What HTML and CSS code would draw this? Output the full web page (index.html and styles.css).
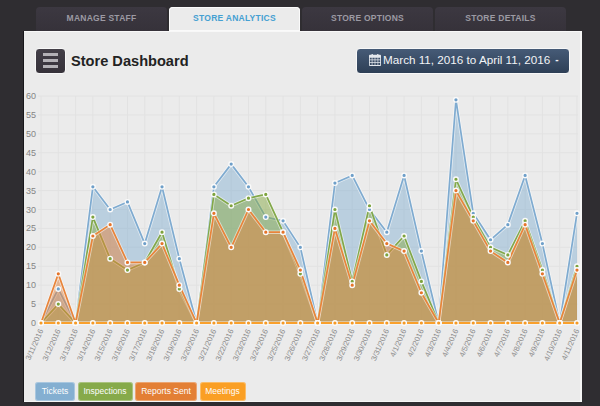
FILE: index.html
```html
<!DOCTYPE html>
<html lang="en">
<head>
<meta charset="utf-8">
<title>Store Dashboard</title>
<link rel="stylesheet" href="styles.css">
</head>
<body>
<nav class="tabs">
  <a class="tab">MANAGE STAFF</a>
  <a class="tab tab-active">STORE ANALYTICS</a>
  <a class="tab">STORE OPTIONS</a>
  <a class="tab">STORE DETAILS</a>
</nav>
<main class="panel">
  <header class="head">
    <button class="menu-btn" aria-label="Menu"><span></span><span></span><span></span></button>
    <h1 class="title">Store Dashboard</h1>
    <button class="date-btn">
      <svg class="cal" viewBox="0 0 14 15" width="12" height="13">
        <path fill="#e4e8ee" fill-rule="evenodd" d="M1 2h2V1h1.500v1h5V1H11v1h2a1 1 0 0 1 1 1v11a1 1 0 0 1-1 1H1a1 1 0 0 1-1-1V3a1 1 0 0 1 1-1zM1 5.500v2h2.200v-2zM4 5.500v2h2.600v-2zM7.400 5.500v2H10v-2zM10.800 5.500v2H13v-2zM1 8.300v2.200h2.200V8.300zM4 8.300v2.200h2.600V8.300zM7.400 8.300v2.200H10V8.300zM10.800 8.300v2.200H13V8.300zM1 11.300V14h2.200v-2.700zM4 11.300V14h2.600v-2.700zM7.400 11.300V14H10v-2.700zM10.800 11.300V14H13v-2.700z"/>
      </svg>
      <span>March 11, 2016 to April 11, 2016</span>
      <span class="caret">-</span>
    </button>
  </header>
  <svg id="chart" class="chart" viewBox="24 90 556 280" width="556" height="280"></svg>
  <footer class="legend">
    <span class="pill pill-blue">Tickets</span>
    <span class="pill pill-green">Inspections</span>
    <span class="pill pill-orange">Reports Sent</span>
    <span class="pill pill-yellow">Meetings</span>
  </footer>
</main>
<script src="chart.js"></script>
</body>
</html>
```

FILE: styles.css
```css
* { box-sizing: border-box; }
html, body { margin: 0; height: 406px; overflow: hidden; }
body {
  background: #2f2d31;
  font-family: "Liberation Sans", Arial, sans-serif;
}
.tabs {
  display: flex;
  gap: 2px;
  height: 31px;
  padding: 7px 0 0 36px;
}
.tab {
  width: 131px;
  height: 24px;
  border-radius: 4px 4px 0 0;
  background: linear-gradient(#3c3841, #36323a);
  color: #9c9aa3;
  font-size: 8.500px;
  font-weight: 700;
  letter-spacing: 0.25px;
  line-height: 23px;
  text-align: center;
}
.tab-active {
  background: #ebebeb;
  color: #45a0d2;
  box-shadow: 0 0 0 1px #fafafa inset;
}
.panel {
  width: 558px;
  height: 371px;
  margin-left: 24px;
  background: #ebebeb;
  border-top: 1px solid #f8f8f8;
  border-right: 2px solid #f6f6f6;
  border-bottom: 1px solid #f6f6f6;
  box-shadow: -1px 0 0 #17161a;
}
.head {
  display: flex;
  align-items: center;
  height: 58px;
  padding: 0 10px 0 11px;
}
.menu-btn {
  display: flex;
  flex-direction: column;
  justify-content: center;
  gap: 3px;
  width: 31px;
  height: 26px;
  padding: 0 7px;
  background: linear-gradient(#433f48, #36323a);
  border: 1px solid #f8f8f8;
  border-radius: 4px;
  margin-top: -1px;
}
.menu-btn span {
  display: block;
  height: 3px;
  background: #b3b1b6;
}
.title {
  margin: -1px 0 0 5px;
  color: #222;
  font-size: 14.600px;
  font-weight: 700;
  line-height: 20px;
}
.date-btn {
  display: flex;
  align-items: center;
  gap: 2px;
  width: 214px;
  height: 26px;
  margin-left: auto;
  margin-top: -1px;
  padding: 0 0 2px 12px;
  color: #f2f4f7;
  font-family: inherit;
  font-size: 11.700px;
  background: linear-gradient(#465b77, #2e3f56);
  border: 1px solid #f8f8f8;
  border-radius: 4px;
  white-space: nowrap;
}
.caret { margin-left: 3px; font-size: 10px; font-weight: 700; }
.cal { flex: none; }
.chart { display: block; overflow: visible; }
.grid { stroke: #e2e2e2; stroke-width: 1; }
.ylab { fill: #858585; font-size: 9px; text-anchor: end; }
.xlab { fill: #8a8a8a; font-size: 7.600px; text-anchor: end; }
.line-halo { fill: none; stroke: rgba(255,255,255,0.55); stroke-width: 3.400; stroke-linejoin: round; }
.area-fill { stroke: none; }
.area-line { fill: none; stroke-width: 1.700; stroke-linejoin: round; }
.dot { stroke: #fafafa; stroke-width: 1.400; }
.fill-blue { fill: rgba(132,175,209,0.48); }
.fill-green { fill: rgba(135,170,70,0.5); }
.fill-orange { fill: rgba(226,130,60,0.5); }
.fill-yellow { fill: none; }
.line-blue { stroke: #7fabd0; }
.line-green { stroke: #82a84a; }
.line-orange { stroke: #e8843a; }
.line-yellow { stroke: #f9a02c; stroke-width: 2; }
.d-blue { fill: #6e9fc9; }
.d-green { fill: #7da33d; }
.d-orange { fill: #e5742a; }
.d-yellow { fill: #f59a25; }
.legend {
  display: flex;
  gap: 2.500px;
  padding: 12px 0 0 11px;
}
.pill {
  height: 19px;
  border-radius: 3px;
  color: #fdfdfd;
  font-size: 8.500px;
  line-height: 18px;
  text-align: center;
  white-space: nowrap;
  box-shadow: 0 0 0 1px rgba(255,255,255,0.3) inset;
}
.pill-blue { width: 40px; background: #84afd1; }
.pill-green { width: 55px; background: #86aa4a; }
.pill-orange { width: 62px; background: #e37f35; }
.pill-yellow { width: 46px; background: #fa9f24; }
```

FILE: chart.js
```js
(function () {
  var svg = document.getElementById('chart');
  var NS = 'http://www.w3.org/2000/svg';
  var X0 = 41, STEP = 17.29, Y0 = 323, UNIT = 3.783;
  var series = [
    ['blue', [0,9,0,36,30,32,21,36,17,0,36,42,36,28,27,20,0,37,39,30,24,39,19,0,59,29,22,26,39,21,0,29]],
    ['green', [0,5,0,28,17,14,16,24,9,0,34,31,33,34,24,13,0,30,11,31,18,23,11,0,38,28,20,18,27,14,0,15]],
    ['orange', [0,13,0,23,26,16,16,21,10,0,29,20,30,24,24,14,0,25,10,27,21,19,8,0,35,27,19,16,26,13,0,14]],
    ['yellow', [0,0,0,0,0,0,0,0,0,0,0,0,0,0,0,0,0,0,0,0,0,0,0,0,0,0,0,0,0,0,0,0]]
  ];
  function px(i) { return X0 + i * STEP; }
  function py(v) { return Y0 - v * UNIT; }
  function el(name, attrs, text) {
    var n = document.createElementNS(NS, name);
    for (var k in attrs) n.setAttribute(k, attrs[k]);
    if (text !== undefined) n.textContent = text;
    svg.appendChild(n);
    return n;
  }
  for (var v = 0; v <= 60; v += 5) {
    el('line', { 'class': 'grid', x1: 38, x2: 578, y1: py(v), y2: py(v) });
    el('text', { 'class': 'ylab', x: 36, y: py(v) + 3 }, v);
  }
  for (var i = 0; i < 32; i++) {
    el('line', { 'class': 'grid', x1: px(i), x2: px(i), y1: py(60), y2: Y0 + 3 });
    var d = new Date(2016, 2, 11 + i);
    var label = (d.getMonth() + 1) + '/' + d.getDate() + '/' + d.getFullYear();
    var lx = px(i) + 2.5, ly = 330.5;
    el('text', { 'class': 'xlab', x: lx, y: ly, transform: 'rotate(-66 ' + lx + ' ' + ly + ')' }, label);
  }
  series.forEach(function (s) {
    var pts = s[1].map(function (v, i) { return px(i) + ',' + py(v); }).join(' ');
    var shape = px(0) + ',' + Y0 + ' ' + pts + ' ' + px(31) + ',' + Y0;
    el('polygon', { 'class': 'area-fill fill-' + s[0], points: shape });
    el('polyline', { 'class': 'line-halo', points: pts });
    el('polyline', { 'class': 'area-line line-' + s[0], points: pts });
  });
  series.forEach(function (s) {
    s[1].forEach(function (v, i) {
      el('circle', { 'class': 'dot d-' + s[0], cx: px(i), cy: py(v), r: 2.300 });
    });
  });
})();
```
